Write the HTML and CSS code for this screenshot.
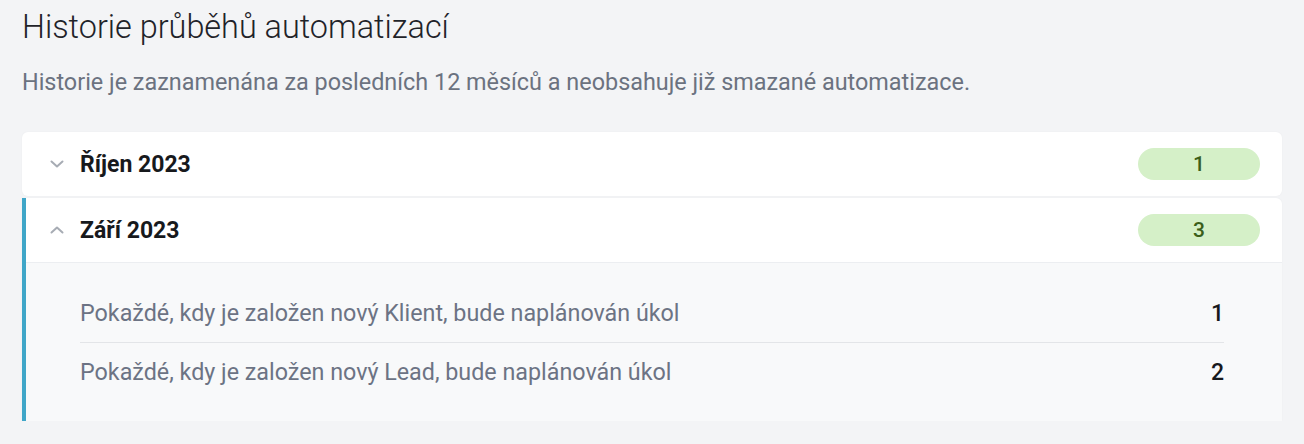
FILE: index.html
```html
<!DOCTYPE html>
<html lang="cs">
<head>
<meta charset="utf-8">
<title>Historie průběhů automatizací</title>
<link rel="stylesheet" href="styles.css">
</head>
<body>
<main class="page">
  <h1 class="title">Historie průběhů automatizací</h1>
  <p class="subtitle">Historie je zaznamenána za posledních 12 měsíců a neobsahuje již smazané automatizace.</p>

  <section class="accordion">
    <div class="panel">
      <div class="panel-head">
        <svg class="chev" viewBox="0 0 14 8" width="14" height="8"><path d="M1.5 1.5l5.5 5 5.5-5" fill="none" stroke="currentColor" stroke-width="2" stroke-linecap="round" stroke-linejoin="round"/></svg>
        <span class="month">Říjen 2023</span>
        <span class="badge">1</span>
      </div>
    </div>
    <div class="panel panel-open">
      <div class="panel-head">
        <svg class="chev" viewBox="0 0 14 8" width="14" height="8"><path d="M1.5 6.5l5.5-5 5.5 5" fill="none" stroke="currentColor" stroke-width="2" stroke-linecap="round" stroke-linejoin="round"/></svg>
        <span class="month">Září 2023</span>
        <span class="badge">3</span>
      </div>
      <div class="panel-body">
        <div class="row">
          <span class="row-name">Pokaždé, kdy je založen nový Klient, bude naplánován úkol</span>
          <span class="row-count">1</span>
        </div>
        <div class="row">
          <span class="row-name">Pokaždé, kdy je založen nový Lead, bude naplánován úkol</span>
          <span class="row-count">2</span>
        </div>
      </div>
    </div>
  </section>
</main>
</body>
</html>
```

FILE: styles.css
```css
* { box-sizing: border-box; }
html, body { margin: 0; padding: 0; }
body {
  background: #f3f4f6;
  font-family: Roboto, "Liberation Sans", sans-serif;
  color: #111827;
}
.page {
  padding: 8px 22px 0 22px;
}
.title {
  margin: 0;
  font-size: 32.4px;
  font-weight: 300;
  line-height: 38px;
  color: #1f2329;
}
.subtitle {
  margin: 21px 0 0 0;
  font-size: 23.4px;
  line-height: 30px;
  color: #6b7280;
}
.accordion {
  margin-top: 35px;
  width: 1260px;
  display: flex;
  flex-direction: column;
  gap: 2px;
}
.panel {
  background: #ffffff;
  border-radius: 6px;
  box-shadow: 0 0 2px rgba(0,0,0,0.04);
  overflow: hidden;
}
.panel-open {
  border-left: 4px solid #3fa6c8;
  border-radius: 0 6px 0 0;
}
.panel-head {
  height: 64px;
  display: flex;
  align-items: center;
  padding: 0 22px 0 28px;
}
.panel-open .panel-head {
  padding-left: 24px;
}
.chev {
  color: #a7acb4;
  width: 14px;
  height: 8px;
  margin-right: 16px;
  flex: none;
}
.month {
  font-size: 23px;
  font-weight: 700;
  color: #17191c;
  flex: 1;
}
.badge {
  width: 122px;
  height: 32px;
  border-radius: 16px;
  background: #d5f0c8;
  color: #3b5f1a;
  font-size: 21px;
  font-weight: 500;
  display: flex;
  align-items: center;
  justify-content: center;
}
.panel-body {
  background: #f8f9fa;
  border-top: 1px solid #eceef1;
  padding: 21px 58px 20px 54px;
}
.row {
  height: 58px;
  display: flex;
  align-items: center;
  justify-content: space-between;
}
.row + .row {
  border-top: 1px solid #e3e5e8;
  height: 59px;
}
.row-name {
  font-size: 23.3px;
  color: #6c7384;
}
.row-count {
  font-size: 23px;
  font-weight: 500;
  color: #17191c;
}
```
